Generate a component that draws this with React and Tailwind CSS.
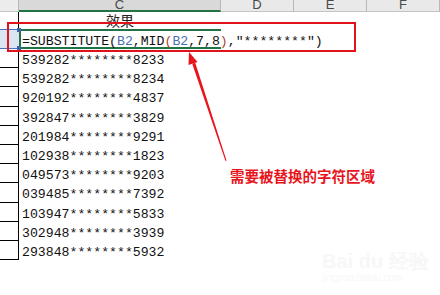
import React from 'react';

const mono = { fontFamily: '"Liberation Mono", "DejaVu Sans Mono", monospace' };

const rows = [
  '539282********8233',
  '539282********8234',
  '920192********4837',
  '392847********3829',
  '201984********9291',
  '102938********1823',
  '049573********9203',
  '039485********7392',
  '103947********5833',
  '302948********3939',
  '293848********5932',
];

const HeaderCell = ({ label, className }) => (
  <div className={`relative h-[12px] overflow-hidden border-r border-[#b8b8b8] ${className}`}>
    <span className="absolute left-0 right-0 top-[-2px] text-center text-[13px] leading-[13px] text-[#4a4a4a] font-['Liberation_Sans',sans-serif]">
      {label}
    </span>
  </div>
);

const App = () => {
  return (
    <div className="relative w-[440px] h-[295px] overflow-hidden bg-white" style={mono}>
      {/* column headers */}
      <div className="flex">
        <HeaderCell label="" className="w-[19px] bg-[#ececec] border-b border-b-[#c4c4c4]" />
        <HeaderCell label="C" className="w-[202px] bg-[#d9d9d9] border-b-2 border-b-[#217346]" />
        <HeaderCell label="D" className="w-[73px] bg-[#e9e9e9] border-b border-b-[#c4c4c4]" />
        <HeaderCell label="E" className="w-[73px] bg-[#e9e9e9] border-b border-b-[#c4c4c4]" />
        <HeaderCell label="F" className="w-[73px] bg-[#e9e9e9] border-b border-b-[#c4c4c4]" />
      </div>

      {/* row 1 */}
      <div className="flex h-[17px]">
        <div className="w-[19px] border-r border-black" />
        <div className="w-[202px] text-center text-[14px] leading-[17px] text-[#222] font-['Noto_Sans_CJK_SC',sans-serif]">
          效果
        </div>
      </div>

      {/* row 2: formula being edited */}
      <div className="flex h-[20px]">
        <div className="relative w-[19px] bg-[#dbe4f1] border-y border-[#4a74c0]">
          <span className="absolute right-[-2px] top-[-2px] w-[4px] h-[4px] bg-[#3e63a8]" />
          <span className="absolute right-[-2px] bottom-[-2px] w-[4px] h-[4px] bg-[#3e63a8]" />
        </div>
        <div className="w-[202px] border-y-2 border-l-2 border-[#217346] pl-[1px] pt-[4px] text-[13.2px] leading-[14px] text-[#111] whitespace-nowrap">
          =SUBSTITUTE(<span className="text-[#4a6fae]">B2</span>,MID<span className="text-[#b0452c]">(</span>
          <span className="text-[#4a6fae]">B2</span>,7,8<span className="text-[#b0452c]">)</span>,"********")
        </div>
      </div>

      {/* data rows */}
      {rows.map((v, i) => (
        <div key={i} className="flex h-[19.2px]">
          <div className="w-[19px] border-r border-b border-black" />
          <div className="w-[202px] pl-[3px] pt-[5px] text-[13.2px] leading-[14px] text-[#111]">{v}</div>
        </div>
      ))}

      {/* red highlight box */}
      <div className="absolute left-[7px] top-[22px] w-[349px] h-[30px] border-2 border-[#e0121c]" />

      {/* arrow */}
      <svg className="absolute left-0 top-0" width="440" height="295" viewBox="0 0 440 295">
        <polygon points="225.5,161 226.5,160.5 195.2,62.8 192.2,63.8" fill="#e8141c" />
        <polygon points="189,52 197.5,62 188.5,65" fill="#e8141c" />
      </svg>

      {/* annotation */}
      <div className="absolute left-[230px] top-[166px] text-[14.5px] leading-[20px] font-bold text-[#e8141c] font-['Noto_Sans_CJK_SC',sans-serif]">
        需要被替换的字符区域
      </div>

      {/* faint watermark */}
      <div className="absolute left-[322px] top-[250px] text-[#f7f7f7] font-['Liberation_Sans',sans-serif]">
        <div className="text-[20px] leading-[22px] font-bold">Bai du 经验</div>
        <div className="text-[10px] leading-[12px]">jingyan.baidu.com</div>
      </div>
    </div>
  );
};

export default App;
